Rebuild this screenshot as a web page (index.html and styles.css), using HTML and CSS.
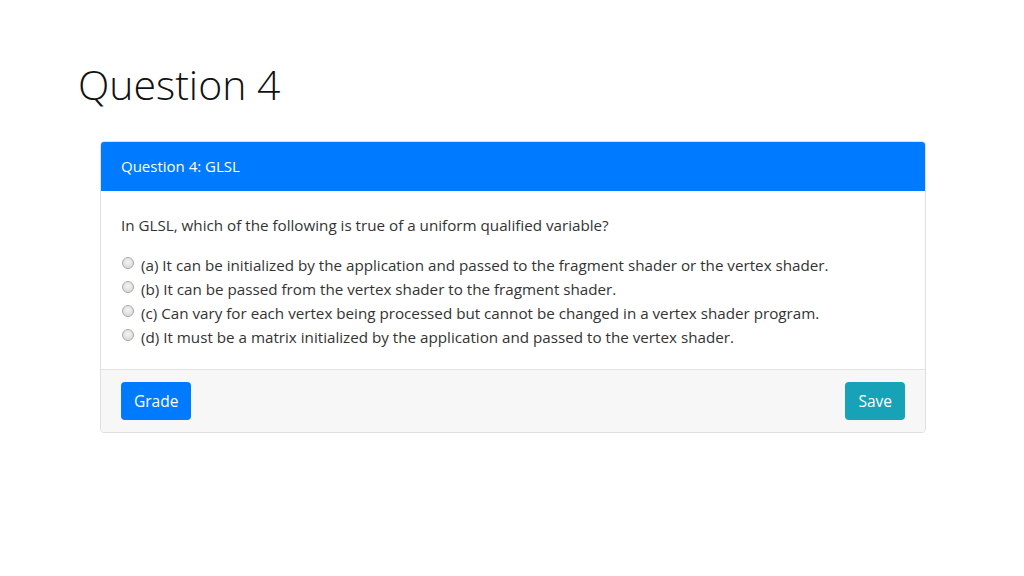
FILE: index.html
```html
<!DOCTYPE html>
<html lang="en">
<head>
  <meta charset="UTF-8">
  <meta name="viewport" content="width=device-width, initial-scale=1">
  <title>Question 4</title>
  <link rel="stylesheet" href="styles.css">
</head>
<body>

<h1 class="page-title">Question 4</h1>

<div class="card">
  <div class="card-header">Question 4: GLSL</div>
  <div class="card-body">
    <p class="question">In GLSL, which of the following is true of a uniform qualified variable?</p>
    <label class="option"><input type="radio" name="q4"> (a) It can be initialized by the application and passed to the fragment shader or the vertex shader.</label>
    <label class="option"><input type="radio" name="q4"> (b) It can be passed from the vertex shader to the fragment shader.</label>
    <label class="option"><input type="radio" name="q4"> (c) Can vary for each vertex being processed but cannot be changed in a vertex shader program.</label>
    <label class="option"><input type="radio" name="q4"> (d) It must be a matrix initialized by the application and passed to the vertex shader.</label>
  </div>
  <div class="card-footer">
    <button class="btn btn-primary">Grade</button>
    <button class="btn btn-info">Save</button>
  </div>
</div>

</body>
</html>
```

FILE: styles.css
```css
/* Основные стили */
body {
  font-family: 'Open Sans', 'Noto Sans', sans-serif;
  margin: 0;
  padding: 0;
  background-color: #fff;
  color: #212529;
}

.page-title {
  font-weight: 300;
  font-size: 41px;
  color: #111;
  margin: 0;
  padding: 57px 0 0 78px;
  line-height: 54px;
}

.card {
  margin: 30px 98px 0 100px;
  border: 1px solid #dfdfdf;
  border-radius: 4px;
  overflow: hidden;
}

.card-header {
  background-color: #007bff;
  color: white;
  font-size: 15px;
  padding: 0 20px;
  height: 49px;
  line-height: 49px;
}

.card-body {
  padding: 22px 20px 20px;
  font-size: 15.2px;
  color: #333;
}

.question {
  margin: 0 0 16px;
  line-height: 24px;
}

.option {
  display: flex;
  align-items: center;
  line-height: 24px;
}

.option input {
  appearance: none;
  -webkit-appearance: none;
  margin: 0 7px 0 1px;
  width: 12px;
  height: 12px;
  border-radius: 50%;
  border: 1px solid #a9a9a9;
  background: radial-gradient(circle at 50% 40%, #f4f4f4 0%, #d2d2d2 100%);
  flex-shrink: 0;
  position: relative;
  top: -2px;
}

.card-footer {
  background-color: #f7f7f7;
  border-top: 1px solid #e3e3e3;
  padding: 12px 20px;
  display: flex;
  justify-content: space-between;
}

.btn {
  font-family: inherit;
  font-size: 15.5px;
  color: white;
  border: none;
  border-radius: 4px;
  padding: 0 13px;
  height: 38px;
  cursor: pointer;
}

.btn-primary {
  background-color: #007bff;
}

.btn-info {
  background-color: #17a2b8;
}
```
